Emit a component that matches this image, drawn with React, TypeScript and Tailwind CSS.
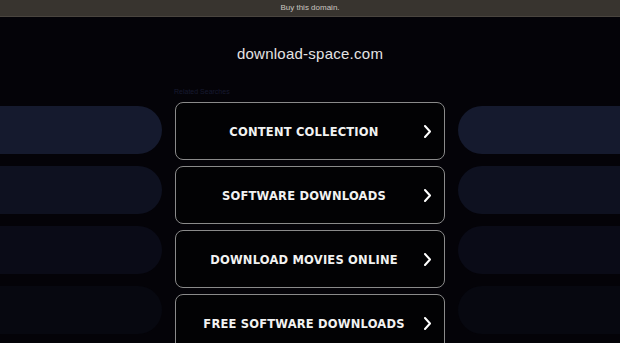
import React from "react";

const items = [
  "CONTENT COLLECTION",
  "SOFTWARE DOWNLOADS",
  "DOWNLOAD MOVIES ONLINE",
  "FREE SOFTWARE DOWNLOADS",
];

const pillColors = ["bg-[#151a2e]", "bg-[#0e1120]", "bg-[#0a0b17]", "bg-[#070810]"];

function Chevron() {
  return (
    <svg width="7" height="13" viewBox="0 0 7 13" className="shrink-0">
      <polyline points="1,1 6,6.5 1,12" fill="none" stroke="#ffffff" strokeWidth="2" strokeLinecap="round" strokeLinejoin="round" />
    </svg>
  );
}

export default function App() {
  return (
    <div className="w-[620px] h-[343px] overflow-hidden bg-[#040308] font-['Liberation_Sans',Arial,sans-serif]">
      <div className="h-[17px] bg-[#38342f] border-b border-[#4a453f] flex items-center justify-center">
        <span className="text-[8px] leading-[10px] text-[#c9c6c0]">Buy this domain.</span>
      </div>
      <div className="mt-[28px] h-[18px] text-center text-[15px] leading-[18px] tracking-[0.25px] text-[#e4e4e4]">
        download-space.com
      </div>
      <div className="mt-[21px] flex justify-center gap-[13px]">
        <div className="w-[162px] shrink-0 pt-[22px] flex flex-col gap-3">
          {pillColors.map((c, i) => (
            <div key={i} className={`h-[48px] w-full rounded-r-[24px] ${c}`} />
          ))}
        </div>
        <div className="w-[270px] shrink-0 flex flex-col">
          <div className="pt-[3px] pb-[5px] -ml-[1px] text-[7px] leading-[10px] text-[#171a30]">Related Searches</div>
          <div className="flex flex-col gap-[6px]">
            {items.map((t) => (
              <div
                key={t}
                className="h-[58px] rounded-lg border-[1.5px] border-[#8a8a8a] bg-[#020204] flex items-center pl-[20px] pr-[13px] gap-[12px]"
              >
                <span className="flex-1 pt-[4px] text-center font-['DejaVu_Sans',Verdana,sans-serif] font-bold text-[11.5px] tracking-[0.2px] text-[#f2f2f2]">
                  {t}
                </span>
                <Chevron />
              </div>
            ))}
          </div>
        </div>
        <div className="w-[162px] shrink-0 pt-[22px] flex flex-col gap-3">
          {pillColors.map((c, i) => (
            <div key={i} className={`h-[48px] w-full rounded-l-[24px] ${c}`} />
          ))}
        </div>
      </div>
    </div>
  );
}
